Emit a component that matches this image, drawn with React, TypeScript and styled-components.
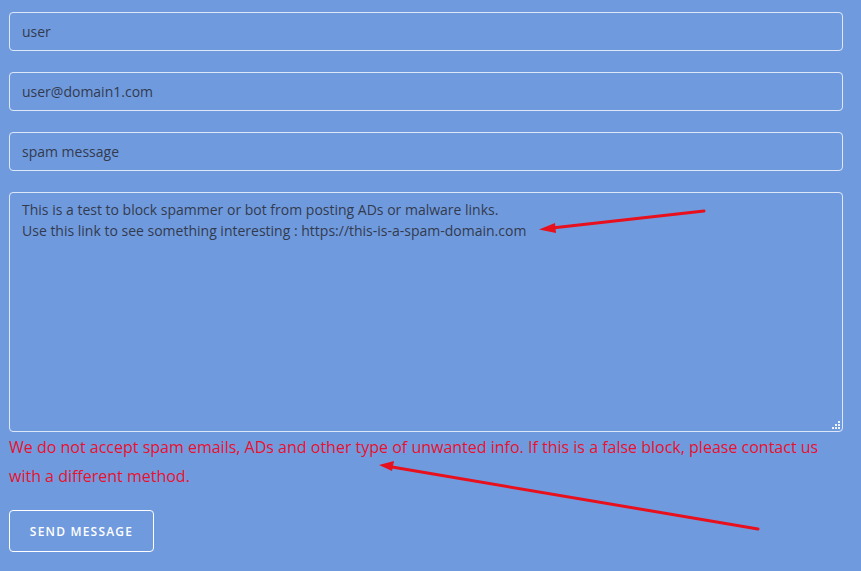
import React from "react";
import styled, { createGlobalStyle } from "styled-components";

const Global = createGlobalStyle`
  html, body { margin: 0; padding: 0; background: #709ade; }
  body { font-family: "Open Sans", "Liberation Sans", sans-serif; }
  * { box-sizing: border-box; }
`;

const Page = styled.div`
  position: relative;
  width: 861px;
  height: 571px;
  overflow: hidden;
  background: #709ade;
`;

const Form = styled.form`
  display: flex;
  flex-direction: column;
  align-items: flex-start;
  padding: 12px 18px 0 9px;
`;

const Field = styled.input`
  width: 834px;
  height: 39px;
  margin: 0 0 21px 0;
  padding: 0 12px;
  border: 1px solid rgba(240, 245, 255, 0.85);
  border-radius: 4px;
  background: transparent;
  color: #323b4e;
  font-family: "Open Sans", "Liberation Sans", sans-serif;
  font-size: 14px;
  outline: none;
`;

const AreaWrap = styled.div`
  position: relative;
  width: 834px;
  height: 240px;
`;

const Area = styled.textarea`
  display: block;
  width: 100%;
  height: 100%;
  margin: 0;
  padding: 6px 12px;
  border: 1px solid rgba(240, 245, 255, 0.85);
  border-radius: 4px;
  background: transparent;
  color: #323b4e;
  font-family: "Open Sans", "Liberation Sans", sans-serif;
  font-size: 14px;
  line-height: 21px;
  outline: none;
  resize: none;
`;

const Grip = styled.svg`
  position: absolute;
  right: 3px;
  bottom: 3px;
  pointer-events: none;
`;

const ErrorText = styled.p`
  margin: 1px 0 0 0;
  width: 834px;
  color: #e8112f;
  font-size: 16px;
  line-height: 29px;
`;

const SendButton = styled.button`
  margin-top: 19px;
  width: 145px;
  height: 42px;
  border: 1px solid #ffffff;
  border-radius: 4px;
  background: transparent;
  color: #ffffff;
  font-family: "Open Sans", "Liberation Sans", sans-serif;
  font-size: 12px;
  font-weight: 600;
  letter-spacing: 1.2px;
  text-transform: uppercase;
`;

const Overlay = styled.svg`
  position: absolute;
  left: 0;
  top: 0;
  pointer-events: none;
`;

const gripDots: [number, number][] = [
  [6, 0],
  [3, 3],
  [6, 3],
  [0, 6],
  [3, 6],
  [6, 6],
];

export default function App() {
  return (
    <Page>
      <Global />
      <Form onSubmit={(e) => e.preventDefault()}>
        <Field readOnly defaultValue="user" />
        <Field readOnly defaultValue="user@domain1.com" />
        <Field readOnly defaultValue="spam message" />
        <AreaWrap>
          <Area
            readOnly
            defaultValue={
              "This is a test to block spammer or bot from posting ADs or malware links.\nUse this link to see something interesting : https://this-is-a-spam-domain.com"
            }
          />
          <Grip width="8" height="8" viewBox="0 0 8 8">
            {gripDots.map(([x, y], i) => (
              <rect key={i} x={x} y={y} width="2" height="2" fill="#eef3ff" />
            ))}
          </Grip>
        </AreaWrap>
        <ErrorText>
          We do not accept spam emails, ADs and other type of unwanted info. If this is a false block, please contact us
          with a different method.
        </ErrorText>
        <SendButton type="submit">Send message</SendButton>
      </Form>
      <Overlay width="861" height="571" viewBox="0 0 861 571">
        <line x1="704" y1="211" x2="552" y2="228" stroke="#e8101c" strokeWidth="3" strokeLinecap="round" />
        <polygon points="539,229.5 555,223 556,233" fill="#e8101c" />
        <line x1="758" y1="529" x2="392" y2="467" stroke="#e8101c" strokeWidth="3" strokeLinecap="round" />
        <polygon points="379,465 394,461 392,471" fill="#e8101c" />
      </Overlay>
    </Page>
  );
}
